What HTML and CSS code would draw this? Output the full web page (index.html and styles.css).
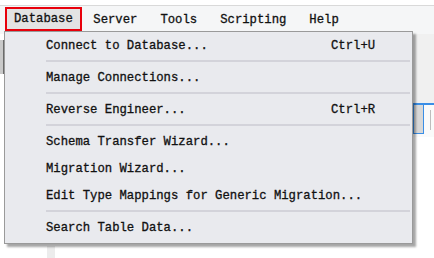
FILE: index.html
```html
<!DOCTYPE html>
<html lang="en">
<head>
    <meta charset="UTF-8">
    <title>MySQL Workbench - Database menu</title>
    <link rel="stylesheet" href="styles.css">
</head>
<body>

<div class="window">
    <div class="topstrip"></div>
    <nav class="menubar">
        <span class="menubar-item active">Database</span>
        <span class="menubar-item">Server</span>
        <span class="menubar-item">Tools</span>
        <span class="menubar-item">Scripting</span>
        <span class="menubar-item">Help</span>
    </nav>

    <div class="workspace">
        <div class="left-edge">
            <div class="edge-icon"></div>
        </div>
        <div class="center">
            <div class="bottom-strip"></div>
        </div>
        <div class="side-panel">
            <div class="side-head"></div>
            <div class="side-field">
                <div class="field-box"></div>
                <div class="field-line"></div>
            </div>
        </div>
    </div>

    <ul class="dropdown">
        <li class="item"><span>Connect to Database...</span><span class="key">Ctrl+U</span></li>
        <li class="sep"></li>
        <li class="item"><span>Manage Connections...</span></li>
        <li class="sep"></li>
        <li class="item"><span>Reverse Engineer...</span><span class="key">Ctrl+R</span></li>
        <li class="sep"></li>
        <li class="item"><span>Schema Transfer Wizard...</span></li>
        <li class="item"><span>Migration Wizard...</span></li>
        <li class="item"><span>Edit Type Mappings for Generic Migration...</span></li>
        <li class="sep"></li>
        <li class="item"><span>Search Table Data...</span></li>
    </ul>
</div>

</body>
</html>
```

FILE: styles.css
```css
body {
    margin: 0;
    background-color: #ffffff;
    font-family: 'Liberation Mono', 'DejaVu Sans Mono', monospace;
    font-size: 12.25px;
    color: #111111;
}
.window {
    position: relative;
    width: 434px;
    height: 258px;
    overflow: hidden;
}
.topstrip {
    height: 5px;
    background-color: #ffffff;
}
.menubar {
    display: flex;
    align-items: center;
    height: 28px;
    border-top: 1px solid #d9d9d9;
    background-color: #f5f6f7;
    padding-left: 5px;
}
.menubar-item {
    padding: 0 11.5px;
    line-height: 24px;
    -webkit-text-stroke: 0.3px #111111;
}
.menubar-item.active {
    padding: 0 7px;
    margin-top: -2px;
    border: 2px solid #e8000b;
    background-color: #e3e3e3;
    line-height: 20px;
}
.workspace {
    display: flex;
    height: 224px;
}
.left-edge {
    width: 4px;
    padding-top: 6px;
}
.edge-icon {
    width: 3px;
    height: 34px;
    border-right: 1px solid #6a6a6a;
    background-color: #c9c9c9;
}
.center {
    flex: 1;
    display: flex;
    flex-direction: column;
    justify-content: flex-end;
    padding-left: 43px;
}
.bottom-strip {
    width: 8px;
    height: 12px;
    background-color: #ececec;
}
.side-panel {
    width: 21px;
    display: flex;
    flex-direction: column;
}
.side-head {
    height: 69px;
    background-color: #f0f0f0;
}
.side-field {
    display: flex;
    gap: 6px;
    height: 32px;
    border-top: 2px solid #3a8ee6;
    background-color: #fafafa;
}
.field-box {
    width: 9px;
    height: 28px;
    border: 1px solid #3a8ee6;
    border-top: none;
    background-color: #d8d8d8;
}
.field-line {
    width: 1px;
    height: 20px;
    margin-top: 5px;
    background-color: #bdbdbd;
}
.dropdown {
    position: absolute;
    left: 4px;
    top: 31px;
    width: 407px;
    margin: 0;
    padding: 0 0 2px 0;
    list-style: none;
    background-color: #e9eaee;
    border: 1px solid #9a9a9a;
    box-shadow: 3px 3px 2px rgba(0, 0, 0, 0.35);
}
.item {
    display: grid;
    grid-template-columns: 285px auto;
    height: 27px;
    align-items: center;
    padding-left: 41px;
    white-space: nowrap;
    -webkit-text-stroke: 0.3px #111111;
}
.sep {
    height: 2px;
    margin: 1px 2px 2px 41px;
    background-color: #d3d3da;
}
```
